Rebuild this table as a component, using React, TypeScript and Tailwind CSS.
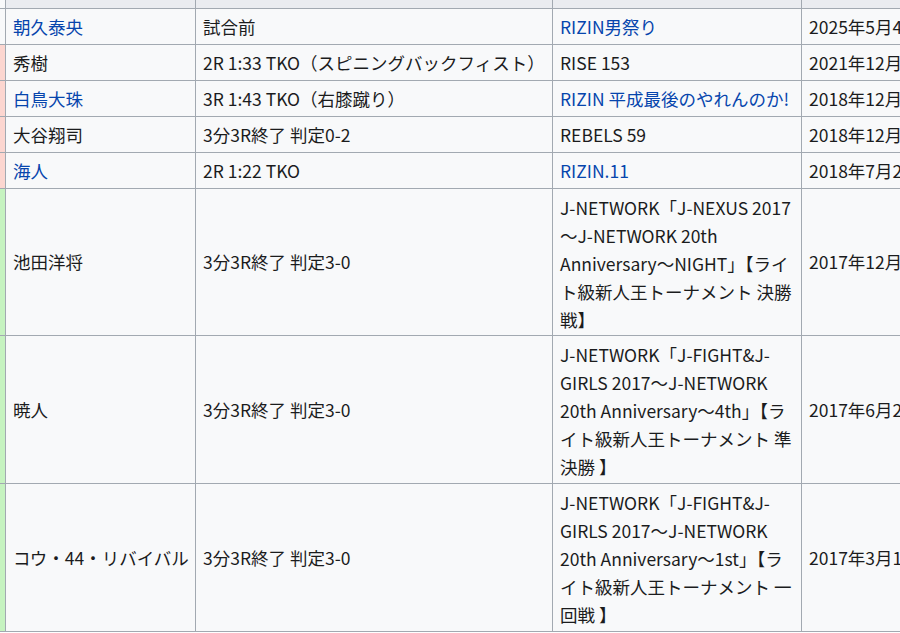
import React from "react";

type Row = {
  strip: string;
  name: string;
  nameLink?: boolean;
  method: string;
  event: React.ReactNode;
  eventLink?: boolean;
  date: string;
  tall?: boolean;
};

const rows: Row[] = [
  { strip: "bg-[#f8f9fa]", name: "朝久泰央", nameLink: true, method: "試合前", event: "RIZIN男祭り", eventLink: true, date: "2025年5月4日" },
  { strip: "bg-[#fcd6d0]", name: "秀樹", method: "2R 1:33 TKO（スピニングバックフィスト）", event: "RISE 153", date: "2021年12月12日" },
  { strip: "bg-[#fcd6d0]", name: "白鳥大珠", nameLink: true, method: "3R 1:43 TKO（右膝蹴り）", event: "RIZIN 平成最後のやれんのか!", eventLink: true, date: "2018年12月31日" },
  { strip: "bg-[#fcd6d0]", name: "大谷翔司", method: "3分3R終了 判定0-2", event: "REBELS 59", date: "2018年12月9日" },
  { strip: "bg-[#fcd6d0]", name: "海人", nameLink: true, method: "2R 1:22 TKO", event: "RIZIN.11", eventLink: true, date: "2018年7月29日" },
  {
    strip: "bg-[#c6f3c0]",
    name: "池田洋将",
    method: "3分3R終了 判定3-0",
    event: (
      <>
        J-NETWORK「J-NEXUS 2017<br />～J-NETWORK 20th<br />Anniversary～NIGHT」【ライ<br />ト級新人王トーナメント 決勝<br />戦】
      </>
    ),
    date: "2017年12月17日",
    tall: true,
  },
  {
    strip: "bg-[#c6f3c0]",
    name: "暁人",
    method: "3分3R終了 判定3-0",
    event: (
      <>
        J-NETWORK「J-FIGHT&amp;J-<br />GIRLS 2017～J-NETWORK<br />20th Anniversary～4th」【ラ<br />イト級新人王トーナメント 準<br />決勝 】
      </>
    ),
    date: "2017年6月25日",
    tall: true,
  },
  {
    strip: "bg-[#c6f3c0]",
    name: "コウ・44・リバイバル",
    method: "3分3R終了 判定3-0",
    event: (
      <>
        J-NETWORK「J-FIGHT&amp;J-<br />GIRLS 2017～J-NETWORK<br />20th Anniversary～1st」【ラ<br />イト級新人王トーナメント 一<br />回戦 】
      </>
    ),
    date: "2017年3月19日",
    tall: true,
  },
];

export default function App() {
  return (
    <div
      className="w-[900px] h-[633px] overflow-hidden bg-white text-[#1b1c1d] text-[17.5px] leading-[28px]"
      style={{ fontFamily: '"Noto Sans CJK JP", "Noto Sans", sans-serif' }}
    >
      <div className="flex flex-col w-[1100px]">
        <div className="flex h-[9px] border-b border-[#a2a9b1] bg-[#eaecf0]">
          <div className="w-[6px] shrink-0 border-r border-[#a2a9b1] bg-[#f8f9fa]" />
          <div className="w-[190px] shrink-0 border-r border-[#a2a9b1]" />
          <div className="w-[357px] shrink-0 border-r border-[#a2a9b1]" />
          <div className="w-[249px] shrink-0 border-r border-[#a2a9b1]" />
          <div className="flex-1" />
        </div>
        {rows.map((r, i) => (
          <div
            key={i}
            className={`flex border-b border-[#a2a9b1] bg-[#f8f9fa] ${r.tall ? (i === 5 ? "h-[147px]" : "h-[148px]") : "h-[36px]"}`}
          >
            <div className={`w-[6px] shrink-0 border-r border-[#a2a9b1] ${r.strip}`} />
            <div className={`w-[190px] shrink-0 border-r border-[#a2a9b1] flex items-center pl-[7px] whitespace-nowrap ${r.nameLink ? "text-[#0645ad]" : ""}`}>
              {r.name}
            </div>
            <div className="w-[357px] shrink-0 border-r border-[#a2a9b1] flex items-center pl-[7px] whitespace-nowrap">
              {r.method}
            </div>
            <div className={`w-[249px] shrink-0 border-r border-[#a2a9b1] flex items-center pl-[7px] whitespace-nowrap ${r.eventLink ? "text-[#0645ad]" : ""}`}>
              <div className={r.tall ? "pt-[3px]" : ""}>{r.event}</div>
            </div>
            <div className="flex-1 flex items-center pl-[7px] whitespace-nowrap">{r.date}</div>
          </div>
        ))}
      </div>
    </div>
  );
}
